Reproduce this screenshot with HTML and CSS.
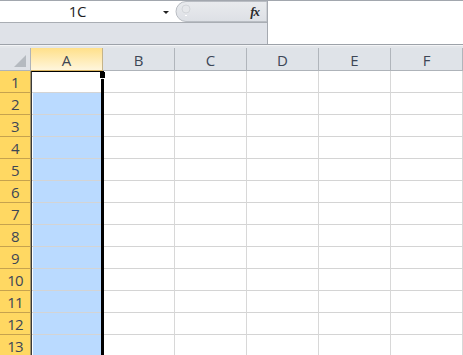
FILE: index.html
```html
<!DOCTYPE html>
<html>
<head>
<meta charset="utf-8">
<link rel="stylesheet" href="styles.css">
</head>
<body>
<div class="fb">
  <div class="fb-left">
    <div class="fb-top">
      <div class="namebox">
        <span class="name">1C</span>
        <span class="arrow"></span>
      </div>
      <div class="bubble">
        <svg class="bubble-bg" width="92" height="21" viewBox="0 0 92 21">
          <defs>
            <linearGradient id="bg" x1="0" y1="0" x2="0" y2="1">
              <stop offset="0" stop-color="#e9ebee"/>
              <stop offset="1" stop-color="#dde0e5"/>
            </linearGradient>
          </defs>
          <path d="M11 0.5 H92 V20.5 H11 A10 10 0 0 1 11 0.5 Z" fill="url(#bg)" stroke="#b9bdc3" stroke-width="1"/>
          <circle cx="11" cy="8" r="4" fill="#e6e8eb" stroke="#d3d6da" stroke-width="1"/>
          <rect x="10" y="14" width="2" height="1" fill="#ffffff"/>
        </svg>
        <span class="fx">fx</span>
      </div>
    </div>
    <div class="fb-bottom"></div>
  </div>
  <div class="fb-right"></div>
</div>
<div class="strip"></div>
<div class="sheet">
  <div class="row head">
    <div class="corner"><span class="tri"></span></div>
    <div class="ch ch-sel">A</div>
    <div class="ch">B</div>
    <div class="ch">C</div>
    <div class="ch">D</div>
    <div class="ch">E</div>
    <div class="ch">F</div>
  </div>
  <div class="row"><div class="rh">1</div><div class="c a active"></div><div class="c"></div><div class="c"></div><div class="c"></div><div class="c"></div><div class="c"></div></div>
  <div class="row"><div class="rh">2</div><div class="c a"></div><div class="c"></div><div class="c"></div><div class="c"></div><div class="c"></div><div class="c"></div></div>
  <div class="row"><div class="rh">3</div><div class="c a"></div><div class="c"></div><div class="c"></div><div class="c"></div><div class="c"></div><div class="c"></div></div>
  <div class="row"><div class="rh">4</div><div class="c a"></div><div class="c"></div><div class="c"></div><div class="c"></div><div class="c"></div><div class="c"></div></div>
  <div class="row"><div class="rh">5</div><div class="c a"></div><div class="c"></div><div class="c"></div><div class="c"></div><div class="c"></div><div class="c"></div></div>
  <div class="row"><div class="rh">6</div><div class="c a"></div><div class="c"></div><div class="c"></div><div class="c"></div><div class="c"></div><div class="c"></div></div>
  <div class="row"><div class="rh">7</div><div class="c a"></div><div class="c"></div><div class="c"></div><div class="c"></div><div class="c"></div><div class="c"></div></div>
  <div class="row"><div class="rh">8</div><div class="c a"></div><div class="c"></div><div class="c"></div><div class="c"></div><div class="c"></div><div class="c"></div></div>
  <div class="row"><div class="rh">9</div><div class="c a"></div><div class="c"></div><div class="c"></div><div class="c"></div><div class="c"></div><div class="c"></div></div>
  <div class="row"><div class="rh">10</div><div class="c a"></div><div class="c"></div><div class="c"></div><div class="c"></div><div class="c"></div><div class="c"></div></div>
  <div class="row"><div class="rh">11</div><div class="c a"></div><div class="c"></div><div class="c"></div><div class="c"></div><div class="c"></div><div class="c"></div></div>
  <div class="row"><div class="rh">12</div><div class="c a"></div><div class="c"></div><div class="c"></div><div class="c"></div><div class="c"></div><div class="c"></div></div>
  <div class="row"><div class="rh">13</div><div class="c a"></div><div class="c"></div><div class="c"></div><div class="c"></div><div class="c"></div><div class="c"></div></div>
  <div class="sel">
    <span class="handle"></span>
    <span class="bar"></span>
  </div>
</div>
</body>
</html>
```
FILE: styles.css
```css
html, body {
  margin: 0;
  padding: 0;
  background: #ffffff;
  overflow: hidden;
  width: 463px;
  height: 355px;
}

body {
  font-family: "Open Sans", "DejaVu Sans", sans-serif;
}

.fb {
  display: flex;
  height: 45px;
  box-sizing: border-box;
  border-top: 1px solid #a2a7ae;
  border-bottom: 1px solid #9da2a9;
}

.fb-left {
  width: 268px;
  box-sizing: border-box;
  border-right: 1px solid #a5a9b0;
  display: flex;
  flex-direction: column;
}

.fb-top {
  height: 22px;
  box-sizing: border-box;
  border-bottom: 1px solid #a9adb3;
  display: flex;
}

.namebox {
  width: 175px;
  background: #ffffff;
  display: flex;
  align-items: center;
}

.name {
  width: 155px;
  text-align: center;
  font-size: 15px;
  color: #1e1e1e;
  line-height: 21px;
  letter-spacing: -0.3px;
}

.arrow {
  margin-left: 8px;
  width: 0;
  height: 0;
  border-left: 3px solid transparent;
  border-right: 3px solid transparent;
  border-top: 3px solid #222;
  margin-top: 1px;
}

.bubble {
  flex: 1;
  position: relative;
  display: flex;
  justify-content: flex-end;
  align-items: center;
}

.bubble-bg {
  position: absolute;
  left: 0;
  top: 0;
}

.fx {
  position: relative;
  font-family: "Liberation Serif", serif;
  font-style: italic;
  font-weight: bold;
  font-size: 13px;
  letter-spacing: -1px;
  color: #2a2a2a;
  margin-right: 8px;
  line-height: 21px;
}

.fb-bottom {
  flex: 1;
  background: #dfe2e8;
}

.fb-right {
  flex: 1;
  background: #ffffff;
}

.strip {
  height: 3px;
  box-sizing: border-box;
  border-top: 1px solid #f3f4f6;
  background: #e3e6ea;
}

.sheet {
  position: relative;
  height: 307px;
  overflow: hidden;
}

.row {
  display: flex;
  height: 22px;
  flex-shrink: 0;
}

.row.head {
  height: 23px;
}

.corner {
  width: 31px;
  box-sizing: border-box;
  background: #dfe2e7;
  border-right: 1px solid #aeb3b9;
  border-bottom: 1px solid #aeb3b9;
  position: relative;
}

.tri {
  position: absolute;
  right: 4px;
  bottom: 3px;
  width: 0;
  height: 0;
  border-left: 12px solid transparent;
  border-bottom: 12px solid #b5bac0;
}

.ch {
  width: 72px;
  box-sizing: border-box;
  background: #dfe3e8;
  border-right: 1px solid #b0b5bb;
  border-bottom: 1px solid #aeb3b9;
  text-align: center;
  font-size: 15px;
  line-height: 24px;
  color: #3d4656;
}

.ch-sel {
  background: linear-gradient(#ffe08a, #fff6dc);
  border-bottom: 1px solid #d9b460;
  border-right: 1px solid #c5b48a;
}

.rh {
  width: 31px;
  box-sizing: border-box;
  background: #ffd862;
  border-right: 1px solid #a59365;
  border-bottom: 1px solid #c6a24e;
  text-align: center;
  font-size: 15px;
  line-height: 22px;
  color: #3d4656;
  letter-spacing: -0.8px;
}

.c {
  width: 72px;
  box-sizing: border-box;
  border-right: 1px solid #d8d8d8;
  border-bottom: 1px solid #d4d4d4;
}

.c.a {
  background: linear-gradient(to right, #ffffff 2px, #badaff 2px);
}

.c.a.active {
  background: #ffffff;
}

.sel {
  position: absolute;
  left: 31px;
  top: 23px;
  width: 73px;
  bottom: 0;
  box-sizing: border-box;
  border-top: 1px solid #000000;
  border-left: 1px solid #3a3a3a;
}

.handle {
  position: absolute;
  right: -1px;
  top: 0;
  width: 5px;
  height: 6px;
  background: #000000;
}

.bar {
  position: absolute;
  right: 0;
  top: 7px;
  bottom: 0;
  width: 3px;
  background: #000000;
}
```
